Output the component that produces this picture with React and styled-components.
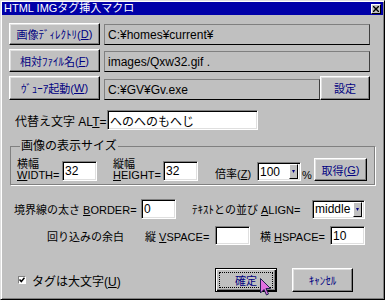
import React from "react";
import styled, { createGlobalStyle } from "styled-components";

const GlobalStyle = createGlobalStyle`
  html, body {
    margin: 0;
    padding: 0;
    background: #c0c0c0;
  }
  body {
    font-family: "Liberation Sans", "Noto Sans CJK JP", sans-serif;
    font-size: 11px;
    color: #000;
  }
  * {
    box-sizing: border-box;
  }
`;

const Window = styled.div`
  position: relative;
  width: 385px;
  height: 300px;
  display: flex;
  flex-direction: column;
  padding: 1px;
  background: #c0c0c0;
  border: 1px solid;
  border-color: #dfdfdf #000 #000 #dfdfdf;
  box-shadow: inset 1px 1px #fff, inset -1px -1px #808080;
`;

const TitleBar = styled.div`
  display: flex;
  align-items: center;
  height: 13px;
  padding: 0 2px 0 2px;
  background: #0000a8;
  color: #fff;
  font-size: 11px;
  line-height: 13px;
  white-space: nowrap;
`;

const CloseBox = styled.div`
  display: flex;
  align-items: center;
  justify-content: center;
  width: 10px;
  height: 10px;
  margin-left: auto;
  background: #c0c0c0;
  border: 1px solid;
  border-color: #fff #000 #000 #fff;
`;

const Body = styled.div`
  display: flex;
  flex-direction: column;
  padding: 8px 13px 0 7px;
`;

const Row = styled.div`
  display: flex;
  align-items: ${(p) => p.$align || "center"};
  height: ${(p) => p.$h || 22}px;
  margin-top: ${(p) => p.$mt || 0}px;
  padding-left: ${(p) => p.$pl || 0}px;
`;

const Button = styled.button`
  display: flex;
  align-items: center;
  justify-content: center;
  flex-shrink: 0;
  width: ${(p) => p.$w}px;
  height: ${(p) => p.$h || 22}px;
  margin-left: ${(p) => p.$ml || 0}px;
  padding: 0;
  font: inherit;
  color: #000080;
  background: #c0c0c0;
  border: 1px solid;
  border-color: #fff #000 #000 #fff;
  box-shadow: inset -1px -1px #808080, inset 1px 1px #dfdfdf;
  white-space: nowrap;
`;

const DefaultButton = styled(Button)`
  border-color: #000;
  box-shadow: inset 1px 1px #fff, inset -1px -1px #000, inset -2px -2px #808080;
  padding: 3px;
`;

const Focus = styled.span`
  display: flex;
  align-items: center;
  justify-content: center;
  width: 100%;
  height: 100%;
  border: 1px dotted #000;
`;

const PathField = styled.div`
  display: flex;
  align-items: center;
  flex: 1;
  height: 21px;
  margin-left: 4px;
  align-self: flex-end;
  padding-left: 3px;
  border: 1px solid;
  border-color: #808080 #404040 #000 #808080;
  white-space: nowrap;
  overflow: hidden;
  font-size: 12px;
`;

const Label = styled.span`
  flex-shrink: 0;
  width: ${(p) => (p.$w ? `${p.$w}px` : "auto")};
  margin-left: ${(p) => p.$ml || 0}px;
  white-space: nowrap;
  font-size: ${(p) => p.$fs || 11}px;
`;

const Input = styled.div`
  display: flex;
  align-items: center;
  flex-shrink: 0;
  width: ${(p) => p.$w}px;
  height: ${(p) => p.$h || 20}px;
  margin-left: ${(p) => p.$ml || 0}px;
  padding-left: 2px;
  background: #fff;
  border: 1px solid;
  border-color: #808080 #fff #fff #808080;
  box-shadow: inset 1px 1px #000, inset -1px -1px #dfdfdf;
  font-size: 12px;
  white-space: nowrap;
  overflow: hidden;
`;

const Select = styled(Input)`
  padding-right: 2px;
  justify-content: space-between;
  height: 19px;
`;

const DropButton = styled.span`
  display: flex;
  align-items: flex-end;
  justify-content: center;
  width: 9px;
  height: 15px;
  padding-bottom: 5px;
  background: #c0c0c0;
  border: 1px solid;
  border-color: #fff #000 #000 #fff;
`;

const Group = styled.fieldset`
  margin: 10px 0 0 1px;
  width: 365px;
  padding: 5px 6px 3px 6px;
  border: 1px solid #808080;
  box-shadow: 1px 1px 0 #fff;
`;

const Legend = styled.legend`
  padding: 0 1px;
  margin-left: 3px;
  font-size: 12px;
  line-height: 12px;
`;

const Stack = styled.div`
  display: flex;
  flex-direction: column;
  flex-shrink: 0;
  width: ${(p) => p.$w}px;
  margin-left: ${(p) => p.$ml || 0}px;
  line-height: 11px;
  white-space: nowrap;
`;

const CheckBox = styled.span`
  display: flex;
  align-items: center;
  justify-content: center;
  width: 8px;
  height: 8px;
  margin: 0 6px 0 9px;
  background: #fff;
  border: 1px solid;
  border-color: #808080 #fff #fff #808080;
`;

const Cursor = styled.svg`
  position: absolute;
  left: 259px;
  top: 277px;
`;

const Arrow = () => (
  <svg width="3" height="3" viewBox="0 0 3 3">
    <path d="M0 0H3L1.5 3Z" fill="#000080" />
  </svg>
);

const App = () => (
  <>
    <GlobalStyle />
    <Window>
      <TitleBar>
        <span>HTML IMGタグ挿入マクロ</span>
        <CloseBox>
          <svg width="6" height="6" viewBox="0 0 6 6">
            <path d="M0 0L6 6M6 0L0 6" stroke="#000" strokeWidth="1.4" />
          </svg>
        </CloseBox>
      </TitleBar>
      <Body>
        <Row>
          <Button $w={91}>
            画像ﾃﾞｨﾚｸﾄﾘ(<u>D</u>)
          </Button>
          <PathField>C:¥homes¥current¥</PathField>
        </Row>
        <Row $mt={4} $h={23}>
          <Button $w={91} $h={23}>
            相対ﾌｧｲﾙ名(<u>F</u>)
          </Button>
          <PathField>images/Qxw32.gif .</PathField>
        </Row>
        <Row $mt={4} $h={24}>
          <Button $w={91} $h={24}>
            ｳﾞｭｰｱ起動(<u>W</u>)
          </Button>
          <PathField>C:¥GV¥Gv.exe</PathField>
          <Button $w={50} $h={24}>
            設定
          </Button>
        </Row>

        <Row $mt={10} $h={20} $pl={6}>
          <Label $w={92} $fs={12}>
            代替え文字 AL<u>T</u>=
          </Label>
          <Input $w={151}>へのへのもへじ</Input>
        </Row>

        <Group>
          <Legend>画像の表示サイズ</Legend>
          <Row $h={24} $align="flex-end">
            <Stack $w={45}>
              <span>横幅</span>
              <span>
                <u>W</u>IDTH=
              </span>
            </Stack>
            <Input $w={35}>32</Input>
            <Stack $w={50} $ml={16}>
              <span>縦幅</span>
              <span>
                <u>H</u>EIGHT=
              </span>
            </Stack>
            <Input $w={35}>32</Input>
            <Label $w={42} $ml={17} $fs={11}>
              倍率(<u>Z</u>)
            </Label>
            <Select $w={44}>
              100
              <DropButton>
                <Arrow />
              </DropButton>
            </Select>
            <Label $w={12} $ml={1}>
              %
            </Label>
            <Button $w={53} $h={23}>
              取得(<u>G</u>)
            </Button>
          </Row>
        </Group>

        <Row $mt={14} $h={20} $pl={5}>
          <Label $w={127}>
            境界線の太さ <u>B</u>ORDER=
          </Label>
          <Input $w={35}>0</Input>
          <Label $w={120} $ml={16}>
            ﾃｷｽﾄとの並び <u>A</u>LIGN=
          </Label>
          <Select $w={53} $h={19}>
            middle
            <DropButton>
              <Arrow />
            </DropButton>
          </Select>
        </Row>

        <Row $mt={7} $h={19} $pl={38}>
          <Label $w={98}>回り込みの余白</Label>
          <Label $w={70}>
            縦 <u>V</u>SPACE=
          </Label>
          <Input $w={35} $h={19} />
          <Label $w={70} $ml={10}>
            横 <u>H</u>SPACE=
          </Label>
          <Input $w={35} $h={19}>
            10
          </Input>
        </Row>

        <Row $mt={23} $h={24}>
          <CheckBox>
            <svg width="6" height="6" viewBox="0 0 6 6">
              <path d="M0.5 2.5L2.3 4.5L5.5 0.8" stroke="#000" strokeWidth="1.5" fill="none" />
            </svg>
          </CheckBox>
          <Label $w={183} $fs={12}>
            タグは大文字(<u>U</u>)
          </Label>
          <DefaultButton $w={62} $h={24}>
            <Focus>確定</Focus>
          </DefaultButton>
          <Button $w={61} $h={24} $ml={15}>
            ｷｬﾝｾﾙ
          </Button>
        </Row>
      </Body>
      <Cursor width="11" height="18" viewBox="0 0 11 18">
        <path
          d="M0.5 0.5V15L4 11.5L6.5 17L8.5 16L6 10.5H10.5Z"
          fill="#e070e0"
          stroke="#202050"
          strokeWidth="1"
        />
      </Cursor>
    </Window>
  </>
);

export default App;
